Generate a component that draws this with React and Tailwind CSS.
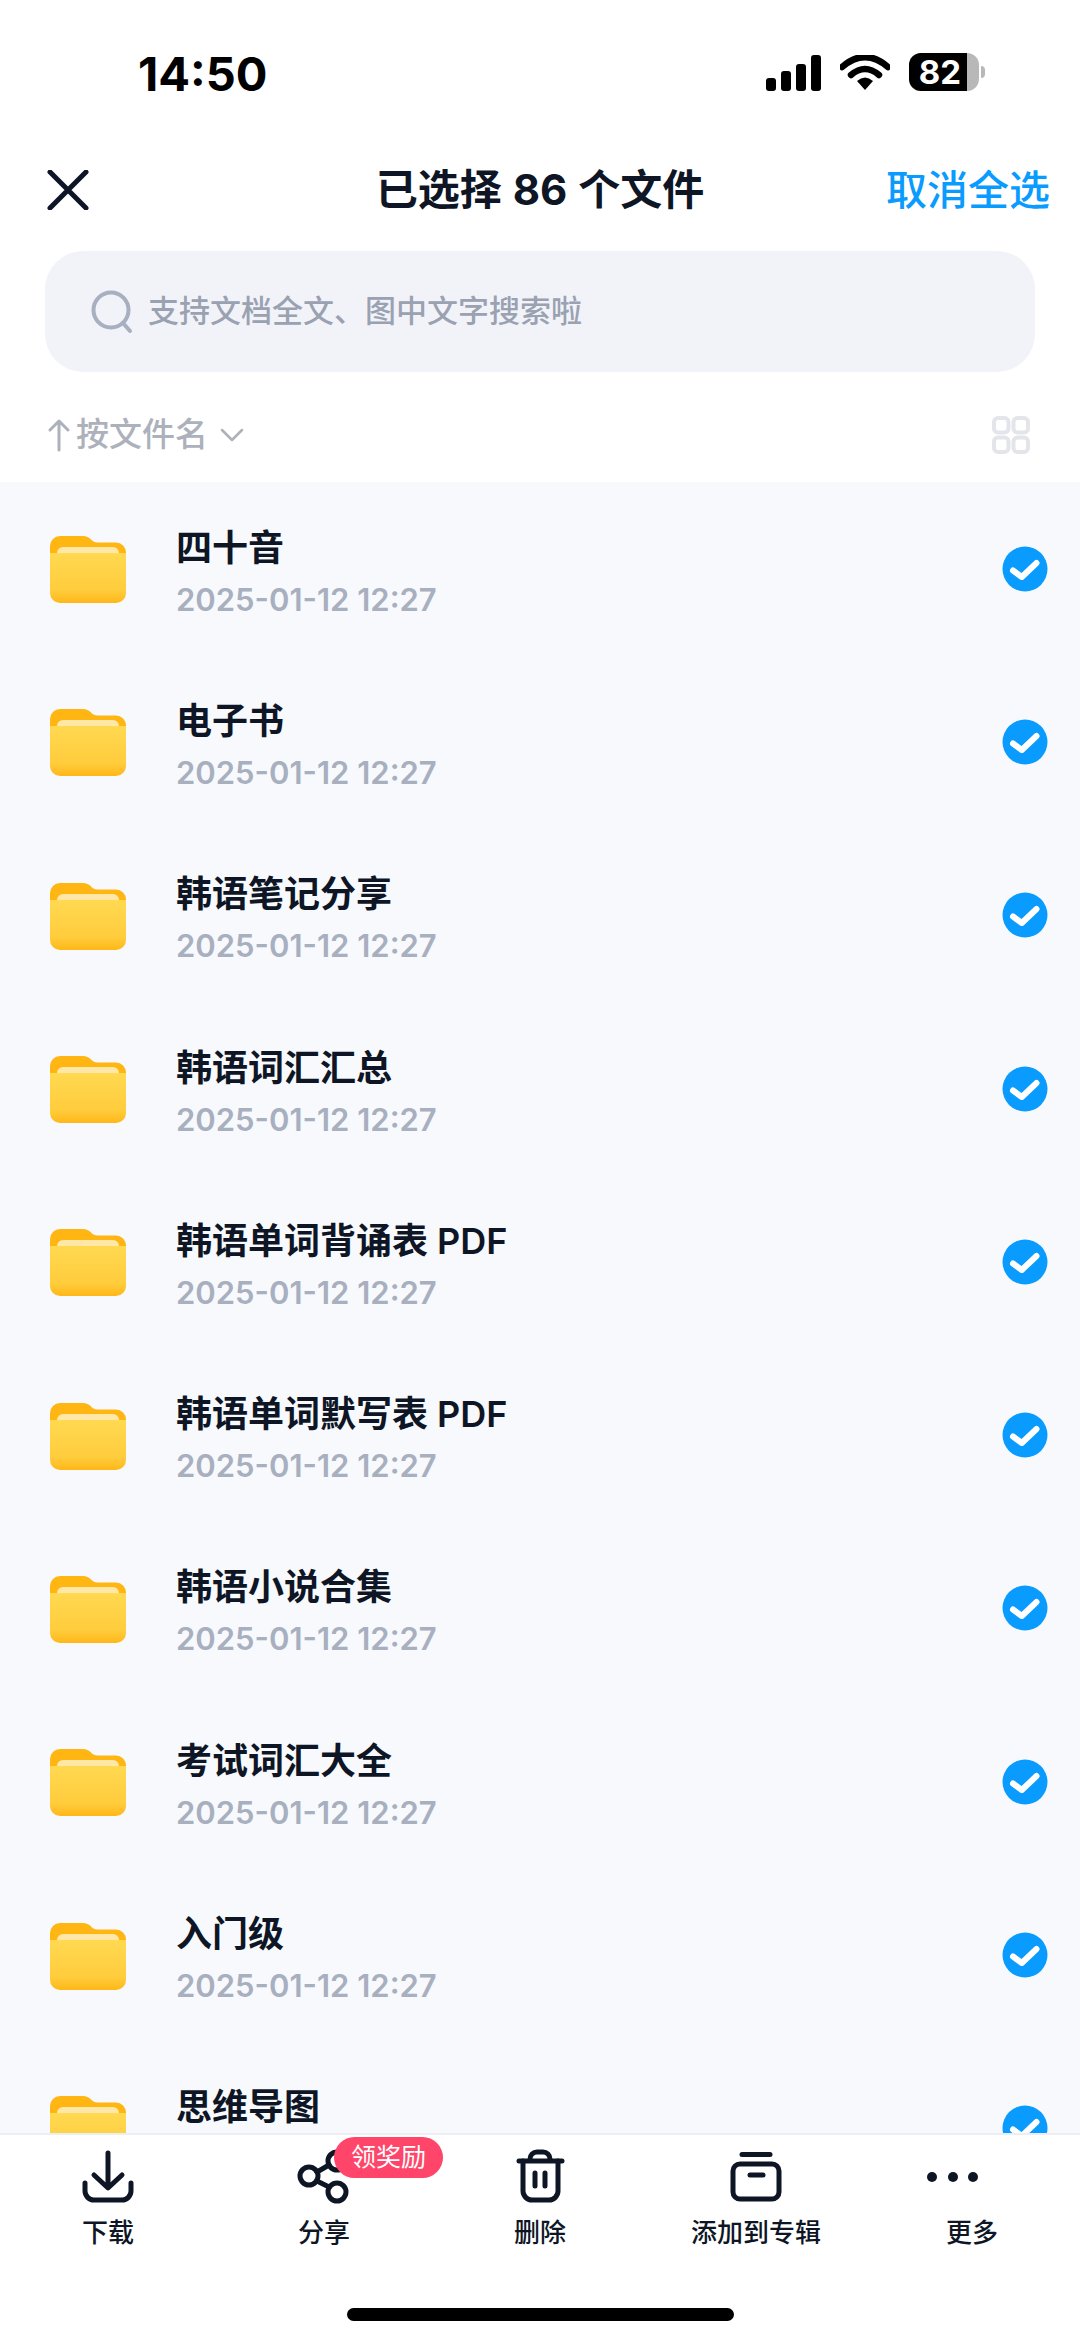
const font = "font-['Inter','Noto_Sans_CJK_SC',sans-serif]";

const files = [
  "四十音",
  "电子书",
  "韩语笔记分享",
  "韩语词汇汇总",
  "韩语单词背诵表 PDF",
  "韩语单词默写表 PDF",
  "韩语小说合集",
  "考试词汇大全",
  "入门级",
  "思维导图",
];

function Folder() {
  return (
    <svg width="76" height="67" viewBox="0 0 76 67" className="mt-[2px] shrink-0">
      <defs>
        <linearGradient id="folderFront" x1="0" y1="0" x2="0" y2="1">
          <stop offset="0" stopColor="#ffd951" />
          <stop offset="0.75" stopColor="#ffcc3c" />
          <stop offset="1" stopColor="#ffb718" />
        </linearGradient>
      </defs>
      <path d="M10 0H33q5 0 8 3.500q2.500 3 6.500 3H66a10 10 0 0 1 10 10V40H0V10A10 10 0 0 1 10 0Z" fill="#ffb612" />
      <rect x="7" y="11" width="62" height="20" rx="6" fill="#ffe7a8" />
      <path d="M0 17H76V57A10 10 0 0 1 66 67H10A10 10 0 0 1 0 57Z" fill="url(#folderFront)" />
    </svg>
  );
}

function Check() {
  return (
    <svg width="46" height="46" viewBox="0 0 46 46" className="shrink-0">
      <circle cx="23" cy="23" r="22.500" fill="#0a9bfe" />
      <path d="M11 24.500L19.800 31L34.500 17" fill="none" stroke="#fff" strokeWidth="6" strokeLinecap="round" strokeLinejoin="round" />
    </svg>
  );
}

function FileRow({ name }) {
  return (
    <div className="flex h-[173.3px] shrink-0 items-center pl-[50px] pr-[32px]">
      <Folder />
      <div className="ml-[50px] flex-1 pt-[8px]">
        <div className="text-[36px] leading-[44px] font-semibold text-[#0e1626]">{name}</div>
        <div className="mt-[10px] text-[31px] leading-[40px] font-semibold text-[#a8afbf]">2025-01-12 12:27</div>
      </div>
      <Check />
    </div>
  );
}

function StatusBar() {
  return (
    <div className="flex h-[150px] shrink-0 items-start pt-[53px] pl-[138px] pr-[95px]">
      <div className="flex-1 text-[47px] leading-[42px] font-bold text-black">14:50</div>
      <svg width="56" height="36" viewBox="0 0 56 36" className="mt-[2px]">
        <rect x="0" y="23" width="10" height="13" rx="3" />
        <rect x="15" y="16" width="10" height="20" rx="3" />
        <rect x="30" y="9" width="10" height="27" rx="3" />
        <rect x="45" y="0" width="10" height="36" rx="3" />
      </svg>
      <svg width="50" height="36" viewBox="0 0 50 36" className="ml-[18px] mt-[2px]">
        <path d="M2 12Q25 -8 48 12" fill="none" stroke="#000" strokeWidth="6.500" strokeLinecap="round" />
        <path d="M11 20Q25 8 39 20" fill="none" stroke="#000" strokeWidth="6.500" strokeLinecap="round" />
        <path d="M17 26Q25 19 33 26L25 35Z" />
      </svg>
      <div className="ml-[19px] flex items-center">
        <div className="flex h-[38px] w-[70px] items-center overflow-hidden rounded-[12px] bg-[#b8b8b8]">
          <div className="flex h-full w-[58px] items-center justify-center bg-black pl-[4px] text-[33px] leading-none font-bold text-white">
            82
          </div>
        </div>
        <div className="ml-[2px] h-[12px] w-[4px] rounded-r-full bg-[#b8b8b8]"></div>
      </div>
    </div>
  );
}

function Header() {
  return (
    <div className="grid h-[80px] shrink-0 grid-cols-[1fr_auto_1fr] items-center px-[30px]">
      <svg width="42" height="40" viewBox="0 0 42 40" className="ml-[17px]">
        <path d="M3 2L39 38M39 2L3 38" fill="none" stroke="#0d1526" strokeWidth="5" strokeLinecap="round" />
      </svg>
      <div className="flex items-center text-[42px] leading-[50px] font-semibold whitespace-nowrap text-[#0e1626]">
        已选择<span className="mx-[11px] font-bold">86</span>个文件
      </div>
      <div className="text-right text-[41px] leading-[50px] font-medium text-[#0a9bfe]">取消全选</div>
    </div>
  );
}

function SearchBar() {
  return (
    <div className="mx-[45px] mt-[21px] flex h-[121px] shrink-0 items-center rounded-[38px] bg-[#f1f3f9] pl-[46px]">
      <svg width="42" height="44" viewBox="0 0 42 44">
        <circle cx="20" cy="20" r="17.500" fill="none" stroke="#a8afc0" strokeWidth="4" />
        <path d="M32 33L39 41" stroke="#a8afc0" strokeWidth="4" strokeLinecap="round" />
      </svg>
      <div className="ml-[15px] text-[31px] font-medium text-[#9aa1b1]">支持文档全文、图中文字搜索啦</div>
    </div>
  );
}

function SortRow() {
  return (
    <div className="flex h-[110px] shrink-0 items-center justify-between pt-[16px] pl-[47px] pr-[50px]">
      <div className="flex items-center text-[33px] font-medium text-[#acb1bc]">
        <svg width="24" height="34" viewBox="0 0 24 34">
          <path d="M12 32V3M3 12L12 3L21 12" fill="none" stroke="#acb1bc" strokeWidth="3" strokeLinecap="round" strokeLinejoin="round" />
        </svg>
        <span className="ml-[5px]">按文件名</span>
        <svg width="24" height="16" viewBox="0 0 24 16" className="ml-[12px]">
          <path d="M2 3L12 13L22 3" fill="none" stroke="#acb1bc" strokeWidth="2.500" strokeLinecap="round" strokeLinejoin="round" />
        </svg>
      </div>
      <svg width="38" height="38" viewBox="0 0 38 38" fill="none" stroke="#e3e5ea" strokeWidth="4">
        <rect x="2" y="2" width="14.500" height="14.500" rx="4" />
        <rect x="21.500" y="2" width="14.500" height="14.500" rx="4" />
        <rect x="2" y="21.500" width="14.500" height="14.500" rx="4" />
        <rect x="21.500" y="21.500" width="14.500" height="14.500" rx="4" />
      </svg>
    </div>
  );
}

const ink = { fill: "none", stroke: "#0e1626", strokeWidth: 5, strokeLinecap: "round", strokeLinejoin: "round" };

function DownloadIcon() {
  return (
    <svg width="56" height="56" viewBox="0 0 56 56" {...ink}>
      <path d="M28 5V39M14 27L28 40L42 27" />
      <path d="M5 35V43A9 9 0 0 0 14 52H42A9 9 0 0 0 51 43V35" />
    </svg>
  );
}

function ShareIcon() {
  return (
    <svg width="56" height="56" viewBox="0 0 56 56" {...ink}>
      <circle cx="13" cy="28" r="9" />
      <circle cx="41" cy="44" r="9" />
      <circle cx="41" cy="13" r="9" />
      <path d="M21 24L33 17M21 33L33 39" />
    </svg>
  );
}

function TrashIcon() {
  return (
    <svg width="56" height="56" viewBox="0 0 56 56" {...ink}>
      <path d="M7 13H50M18 13V11A7 7 0 0 1 25 4H31A7 7 0 0 1 38 11V13" />
      <path d="M11 13V43A9 9 0 0 0 20 52H37A9 9 0 0 0 46 43V13" />
      <path d="M23 25V38M33 25V38" />
    </svg>
  );
}

function AlbumIcon() {
  return (
    <svg width="56" height="56" viewBox="0 0 56 56" {...ink}>
      <path d="M14 6.500H42" />
      <rect x="5" y="16" width="46" height="35" rx="7" />
      <path d="M22 27H35" />
    </svg>
  );
}

function MoreIcon() {
  return (
    <svg width="56" height="56" viewBox="0 0 56 56" fill="#0e1626" className="mr-[38px]">
      <circle cx="7" cy="29" r="5" />
      <circle cx="28" cy="29" r="5" />
      <circle cx="48" cy="29" r="5" />
    </svg>
  );
}

function BottomBar() {
  const tabs = [
    { label: "下载", icon: <DownloadIcon /> },
    { label: "分享", icon: <ShareIcon />, badge: true },
    { label: "删除", icon: <TrashIcon /> },
    { label: "添加到专辑", icon: <AlbumIcon /> },
    { label: "更多", icon: <MoreIcon /> },
  ];

  return (
    <div className="flex h-[208px] shrink-0 flex-col border-t-2 border-[#eceef3] bg-white">
      <div className="grid grid-cols-5 pt-[13px]">
        {tabs.map((tab) => (
          <div key={tab.label} className="relative flex flex-col items-center">
            {tab.icon}
            <div className="mt-[13px] text-[26px] leading-[32px] font-medium text-[#0e1626]">{tab.label}</div>
            {tab.badge && (
              <div className="absolute top-[-11px] left-[118px] flex h-[41px] w-[109px] items-center justify-center rounded-full bg-[#ff4569] text-[25px] leading-none text-white">
                领奖励
              </div>
            )}
          </div>
        ))}
      </div>
      <div className="mx-auto mt-auto mb-[20px] h-[13px] w-[387px] rounded-full bg-black"></div>
    </div>
  );
}

export default function App() {
  return (
    <div className={`flex h-screen flex-col overflow-hidden bg-white ${font}`}>
      <StatusBar />
      <Header />
      <SearchBar />
      <SortRow />
      <div className="flex min-h-0 flex-1 flex-col overflow-hidden bg-[#f7f9fd]">
        {files.map((name) => (
          <FileRow key={name} name={name} />
        ))}
      </div>
      <BottomBar />
    </div>
  );
}
